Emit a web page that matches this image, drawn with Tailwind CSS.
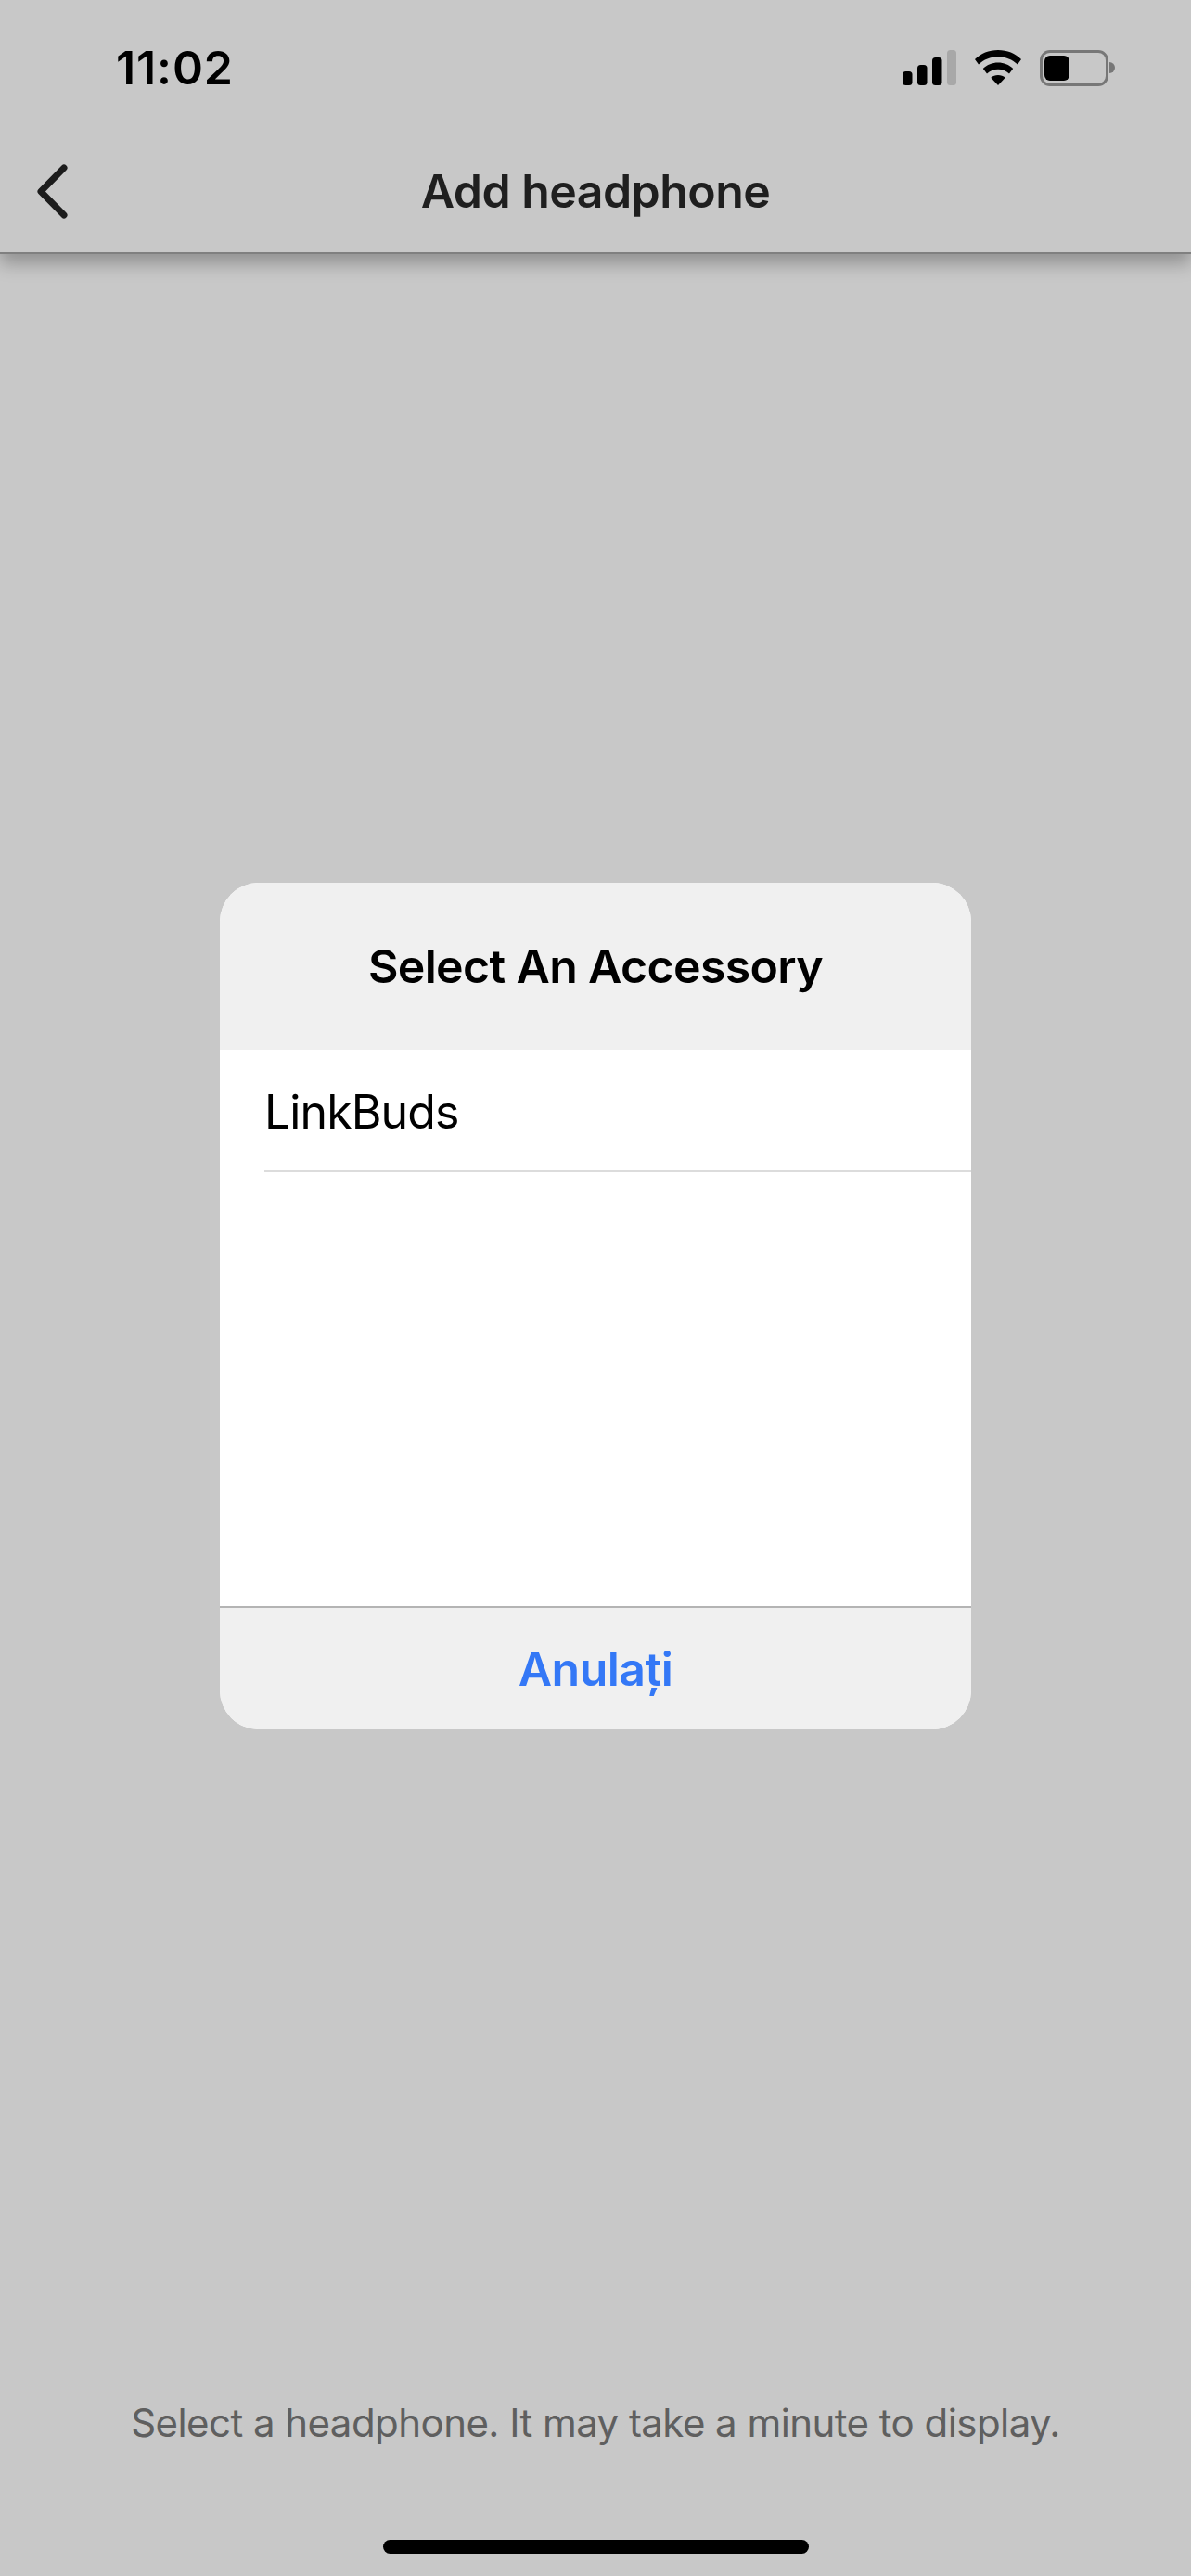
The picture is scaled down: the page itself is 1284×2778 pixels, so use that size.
<!DOCTYPE html>
<html lang="en">
<head>
  <meta charset="UTF-8" />
  <title>Add headphone</title>
  <meta name="viewport" content="width=device-width, initial-scale=1.0" />
  <script src="https://cdn.jsdelivr.net/npm/@tailwindcss/browser@4"></script>
</head>
<body class="bg-[#c8c8c8] font-['Inter',sans-serif] overflow-hidden">

<div class="flex flex-col h-[2778px] w-[1284px]">

  <!-- Top bar -->
  <header class="h-[274px] shrink-0 bg-[#c8c8c8] border-b-2 border-[#808080] shadow-[0_10px_18px_rgba(0,0,0,0.28)]">
    <!-- Status bar -->
    <div class="flex items-center justify-between h-[146px] pl-[125px] pr-[82px]">
      <span class="text-[50px] leading-none font-semibold text-black tracking-[0.9px]">11:02</span>
      <div class="flex items-center">
        <svg class="mr-[18px]" width="59" height="38" viewBox="0 0 59 38">
          <rect x="0" y="23" width="10.5" height="15" rx="3.5" fill="#000" />
          <rect x="16" y="16" width="10.5" height="22" rx="3.5" fill="#000" />
          <rect x="32" y="8" width="10.5" height="30" rx="3.5" fill="#000" />
          <rect x="48" y="0" width="10" height="38" rx="3.5" fill="#a8a8a8" />
        </svg>
        <svg class="mr-[19px]" width="52" height="38" viewBox="0 0 52 38">
          <path d="M26 0C16 0 7.500 3.600 1 10L5 15.500C10.500 10.200 17.800 7.200 26 7.200S41.500 10.200 47 15.500L51 10C44.500 3.600 36 0 26 0Z" fill="#000" />
          <path d="M26 13.500C19.800 13.500 14.200 15.800 9.800 20L14 25.500C17.200 22.500 21.400 20.700 26 20.700S34.800 22.500 38 25.500L42.200 20C37.800 15.800 32.200 13.500 26 13.500Z" fill="#000" />
          <path d="M26 27C23 27 20.400 28 18.300 29.800L26 38L33.700 29.800C31.600 28 29 27 26 27Z" fill="#000" />
        </svg>
        <div class="flex items-center">
          <div class="w-[74px] h-[39px] rounded-[11px] border-[3px] border-[#777777] pl-[2px] py-[3px]">
            <div class="w-[27px] h-[27px] rounded-[6px] bg-black"></div>
          </div>
          <div class="w-[6px] h-[12px] rounded-r-full bg-[#777777] ml-[1px]"></div>
        </div>
      </div>
    </div>
    <!-- Nav row -->
    <div class="relative flex items-center justify-center h-[120px]">
      <svg class="absolute left-[38px] top-[30px]" width="36" height="60" viewBox="0 0 36 60">
        <path d="M31 5L6 30.500L31 56" fill="none" stroke="#1c1c1c" stroke-width="7" stroke-linecap="round" stroke-linejoin="round" />
      </svg>
      <h1 class="text-[50px] leading-none font-semibold text-[#1f1f1f] tracking-[-0.55px]">Add headphone</h1>
    </div>
  </header>

  <!-- Accessory dialog -->
  <main class="flex-1 pt-[678px]">
    <div class="w-[810px] h-[913px] mx-auto rounded-[42px] overflow-hidden flex flex-col bg-white">
      <div class="h-[180px] shrink-0 bg-[#f0f0f0] flex items-center justify-center">
        <h2 class="text-[50px] leading-none font-semibold text-black tracking-[-0.65px]">Select An Accessory</h2>
      </div>
      <ul class="flex-1">
        <li class="ml-[48px] h-[132px] flex items-center border-b-2 border-[#dcdcdc]">
          <span class="text-[50px] leading-none text-black tracking-[-0.9px] translate-y-[2px]">LinkBuds</span>
        </li>
      </ul>
      <div class="h-[133px] shrink-0 bg-[#f0f0f0] border-t-2 border-[#b4b4b4] flex items-center justify-center">
        <button class="text-[50px] leading-none font-semibold text-[#3478f6] tracking-[-0.5px]">Anulați</button>
      </div>
    </div>
  </main>

  <!-- Hint + home indicator -->
  <footer class="shrink-0 flex flex-col items-center pb-[24px]">
    <p class="text-[42px] leading-none text-[#5f5f5f] tracking-[-0.55px]">Select a headphone. It may take a minute to display.</p>
    <div class="mt-[105px] w-[459px] h-[15px] rounded-full bg-black"></div>
  </footer>
</div>

</body>
</html>
